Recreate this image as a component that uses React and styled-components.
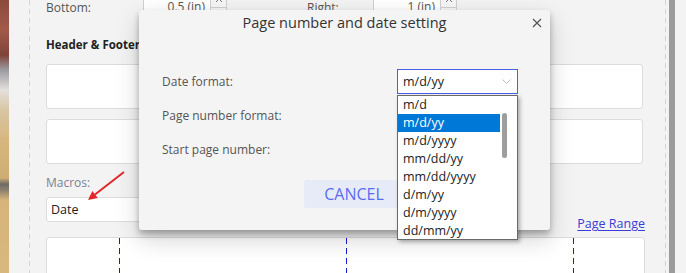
import React from "react";
import styled, { createGlobalStyle } from "styled-components";

const GlobalStyle = createGlobalStyle`
  html, body {
    margin: 0;
    padding: 0;
    background: #f3f3f3;
  }
  body {
    font-family: "Open Sans", "Liberation Sans", sans-serif;
  }
`;

const Screen = styled.div`
  position: relative;
  display: flex;
  width: 686px;
  height: 273px;
  overflow: hidden;
  background: #f3f3f3;
`;

const PhotoStrip = styled.div`
  width: 9px;
  flex-shrink: 0;
  background: linear-gradient(
    to bottom,
    #8c4a3c 0px,
    #a25a4a 30px,
    #7e4438 55px,
    #9c9aa2 70px,
    #e4e0dc 90px,
    #d8c6a4 110px,
    #d7b77f 140px,
    #cfae74 178px,
    #6e6a66 184px,
    #8a8070 190px,
    #d6b47c 200px,
    #d9b880 273px
  );
`;

const Panel = styled.div`
  flex: 1;
  display: flex;
  padding: 0 3px 0 20px;
`;

const Sheet = styled.div`
  flex: 1;
  display: flex;
  flex-direction: column;
  padding: 0 23px 0 17px;
  background:
    linear-gradient(#d4d4d4 55%, transparent 0) left top / 1px 9px repeat-y,
    linear-gradient(#d4d4d4 55%, transparent 0) right top / 1px 9px repeat-y;
  & > * {
    flex-shrink: 0;
  }
`;

const TopRow = styled.div`
  display: flex;
  align-items: center;
  height: 26px;
  margin-top: -6px;
`;

const FieldLabel = styled.span`
  width: ${(p) => p.$width}px;
  margin-left: ${(p) => p.$offset || 0}px;
  font-size: 12px;
  color: #555;
`;

const SpinInput = styled.div`
  display: flex;
  width: 84px;
  height: 100%;
  background: #fff;
  border: 1px solid #d0d0d0;
  box-sizing: border-box;
`;

const SpinValue = styled.span`
  flex: 1;
  text-align: right;
  padding-right: 5px;
  font-size: 12px;
  line-height: 24px;
  color: #555;
`;

const Spinner = styled.div`
  width: 15px;
  display: flex;
  flex-direction: column;
  border-left: 1px solid #d0d0d0;
`;

const SpinButton = styled.div`
  flex: 1;
  display: flex;
  align-items: center;
  justify-content: center;
  background: #f6f6f6;
  & + & {
    border-top: 1px solid #d0d0d0;
  }
`;

const SectionTitle = styled.div`
  margin-top: 17px;
  font-size: 11.5px;
  font-weight: 700;
  line-height: 16px;
  color: #222;
`;

const TextBox = styled.div`
  height: 45px;
  margin-top: ${(p) => p.$top}px;
  background: #fff;
  border: 1px solid #dcdcdc;
  border-radius: 3px;
  box-sizing: border-box;
`;

const MacrosRow = styled.div`
  display: flex;
  justify-content: space-between;
  align-items: flex-end;
  margin-top: 11px;
  margin-right: -2px;
`;

const MacrosBlock = styled.div`
  display: flex;
  flex-direction: column;
  padding-bottom: 15px;
`;

const MacrosLabel = styled.span`
  font-size: 12px;
  line-height: 16px;
  color: #7a8290;
`;

const MacroInput = styled.div`
  width: 260px;
  height: 25px;
  margin-top: 6px;
  padding-left: 4px;
  background: #fff;
  border: 1px solid #dcdcdc;
  border-radius: 3px;
  box-sizing: border-box;
  font-size: 12.5px;
  line-height: 23px;
  color: #222;
`;

const RangeLink = styled.a`
  margin-bottom: 5px;
  font-size: 12.5px;
  line-height: 16px;
  color: #3b3bd8;
  text-decoration: underline;
  text-underline-offset: 2px;
`;

const GuideBox = styled.div`
  display: grid;
  grid-template-columns: 72px 1px 1fr 1px 1fr 1px 70px;
  height: 60px;
  margin-right: -2px;
  background: #fff;
  border: 1px solid #dcdcdc;
  border-radius: 3px;
  box-sizing: border-box;
`;

const Guide = styled.div`
  background: repeating-linear-gradient(to bottom, #1a1ad0 0 6px, transparent 6px 10px);
`;

const ScrollRail = styled.div`
  width: 6px;
  flex-shrink: 0;
  background: #9b9b9b;
`;

const Gutter = styled.div`
  width: 11px;
  flex-shrink: 0;
`;

const Dialog = styled.div`
  position: absolute;
  left: 139px;
  top: 10px;
  width: 411px;
  height: 220px;
  display: flex;
  flex-direction: column;
  background: #f4f4f4;
  border-radius: 3px;
  box-shadow: 0 4px 6px rgba(0, 0, 0, 0.28), 0 9px 24px rgba(0, 0, 0, 0.18);
`;

const DialogHeader = styled.div`
  display: grid;
  grid-template-columns: 1fr auto 1fr;
  align-items: center;
  height: 25px;
`;

const DialogTitle = styled.h2`
  grid-column: 2;
  margin: 0;
  font-size: 14.5px;
  font-weight: 400;
  color: #333;
`;

const CloseButton = styled.button`
  justify-self: end;
  display: flex;
  margin-right: 8px;
  padding: 0;
  border: none;
  background: none;
`;

const DialogBody = styled.div`
  display: flex;
  flex-direction: column;
  gap: 9px;
  padding: 34px 0 0 23px;
`;

const FormRow = styled.div`
  display: flex;
  align-items: center;
  height: 25px;
`;

const FormLabel = styled.span`
  width: 235px;
  font-size: 12px;
  color: #555;
`;

const Select = styled.div`
  display: flex;
  align-items: center;
  justify-content: space-between;
  width: 121px;
  height: 25px;
  padding: 0 6px 0 5px;
  background: #fff;
  border: 1px solid ${(p) => (p.$focused ? "#4a5ee8" : "#cfcfcf")};
  box-sizing: border-box;
  font-size: 12.5px;
  color: #222;
`;

const DialogFooter = styled.div`
  display: flex;
  justify-content: flex-end;
  gap: 10px;
  margin-top: 18px;
  padding-right: 40px;
`;

const FooterButton = styled.button`
  width: ${(p) => p.$width}px;
  height: 28px;
  padding: 0;
  border: none;
  border-radius: 2px;
  background: #e7ebf8;
  font-family: "Open Sans", "Liberation Sans", sans-serif;
  font-size: 16px;
  color: #5a6cf0;
`;

const OptionList = styled.div`
  position: absolute;
  left: 258px;
  top: 85px;
  width: 121px;
  height: 145px;
  display: flex;
  background: #fff;
  border: 1px solid #6a6a6a;
  box-sizing: border-box;
  box-shadow: 2px 2px 4px rgba(0, 0, 0, 0.3);
  overflow: hidden;
`;

const Options = styled.ul`
  flex: 1;
  margin: 0;
  padding: 0;
  list-style: none;
`;

const Option = styled.li`
  height: 18px;
  padding-left: 5px;
  font-size: 12.5px;
  line-height: 18px;
  color: ${(p) => (p.$selected ? "#fff" : "#222")};
  background: ${(p) => (p.$selected ? "#0078d7" : "transparent")};
`;

const ScrollTrack = styled.div`
  width: 17px;
  padding: 17px 0 0 2px;
  box-sizing: border-box;
`;

const ScrollThumb = styled.div`
  width: 5px;
  height: 45px;
  border-radius: 3px;
  background: #9e9e9e;
`;

const Annotation = styled.svg`
  position: absolute;
  left: 80px;
  top: 165px;
`;

const formats = [
  "m/d",
  "m/d/yy",
  "m/d/yyyy",
  "mm/dd/yy",
  "mm/dd/yyyy",
  "d/m/yy",
  "d/m/yyyy",
  "dd/mm/yy",
];

const UpIcon = () => (
  <svg width="8" height="5" viewBox="0 0 8 5">
    <polyline points="1,4 4,1 7,4" fill="none" stroke="#777" strokeWidth="1" />
  </svg>
);

const Chevron = () => (
  <svg width="9" height="5" viewBox="0 0 9 5">
    <polyline points="0.5,0.5 4.5,4.5 8.5,0.5" fill="none" stroke="#bbb" strokeWidth="1" />
  </svg>
);

const CloseIcon = () => (
  <svg width="10" height="10" viewBox="0 0 10 10">
    <path d="M1 1 L9 9 M9 1 L1 9" stroke="#555" strokeWidth="1.2" />
  </svg>
);

const SpinField = ({ value }) => (
  <SpinInput>
    <SpinValue>{value}</SpinValue>
    <Spinner>
      <SpinButton>
        <UpIcon />
      </SpinButton>
      <SpinButton />
    </Spinner>
  </SpinInput>
);

const App = () => {
  return (
    <Screen>
      <GlobalStyle />
      <PhotoStrip />
      <Panel>
        <Sheet>
          <TopRow>
            <FieldLabel $width={97}>Bottom:</FieldLabel>
            <SpinField value="0.5 (in)" />
            <FieldLabel $width={66} $offset={80}>
              Right:
            </FieldLabel>
            <SpinField value="1 (in)" />
          </TopRow>
          <SectionTitle>Header &amp; Footer</SectionTitle>
          <TextBox $top={11} />
          <TextBox $top={10} />
          <MacrosRow>
            <MacrosBlock>
              <MacrosLabel>Macros:</MacrosLabel>
              <MacroInput>Date</MacroInput>
            </MacrosBlock>
            <RangeLink>Page Range</RangeLink>
          </MacrosRow>
          <GuideBox>
            <div />
            <Guide />
            <div />
            <Guide />
            <div />
            <Guide />
            <div />
          </GuideBox>
        </Sheet>
      </Panel>
      <ScrollRail />
      <Gutter />

      <Annotation width="50" height="40" viewBox="0 0 50 40">
        <line x1="44" y1="7" x2="15" y2="29.5" stroke="#e3262a" strokeWidth="2" />
        <polygon points="8,35 17.8,32.9 12.4,26" fill="#e3262a" />
      </Annotation>

      <Dialog>
        <DialogHeader>
          <DialogTitle>Page number and date setting</DialogTitle>
          <CloseButton>
            <CloseIcon />
          </CloseButton>
        </DialogHeader>
        <DialogBody>
          <FormRow>
            <FormLabel>Date format:</FormLabel>
            <Select $focused>
              m/d/yy
              <Chevron />
            </Select>
          </FormRow>
          <FormRow>
            <FormLabel>Page number format:</FormLabel>
            <Select>
              <span />
              <Chevron />
            </Select>
          </FormRow>
          <FormRow>
            <FormLabel>Start page number:</FormLabel>
            <Select />
          </FormRow>
        </DialogBody>
        <DialogFooter>
          <FooterButton $width={100}>CANCEL</FooterButton>
          <FooterButton $width={96}>OK</FooterButton>
        </DialogFooter>
        <OptionList>
          <Options>
            {formats.map((f) => (
              <Option key={f} $selected={f === "m/d/yy"}>
                {f}
              </Option>
            ))}
          </Options>
          <ScrollTrack>
            <ScrollThumb />
          </ScrollTrack>
        </OptionList>
      </Dialog>
    </Screen>
  );
};

export default App;
